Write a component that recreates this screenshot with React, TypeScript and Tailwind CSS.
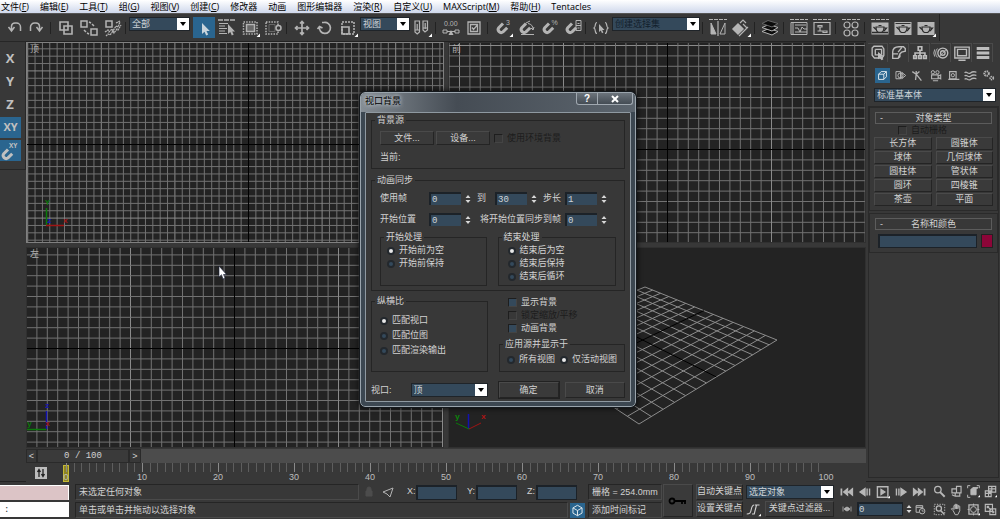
import { ReactNode, useState } from "react"
import clsx from "clsx"

const menus = [
    ["文件", "F"], ["编辑", "E"], ["工具", "T"], ["组", "G"], ["视图", "V"], ["创建", "C"],
    ["修改器", ""], ["动画", ""], ["图形编辑器", ""], ["渲染", "R"], ["自定义", "U"],
    ["MAXScript", "M"], ["帮助", "H"], ["Tentacles", ""]
]

const primitives = ["长方体", "圆锥体", "球体", "几何球体", "圆柱体", "管状体", "圆环", "四棱锥", "茶壶", "平面"]

interface IconProps {
    children: ReactNode
    size?: number
}

function Icon({ children, size = 20 }: IconProps) {
    return (
        <svg
            width={size}
            height={size}
            viewBox="0 0 20 20"
            fill="none"
            stroke="currentColor"
            strokeWidth={1.5}
            className="shrink-0"
            aria-hidden="true"
        >
            {children}
        </svg>
    )
}

const flyout = <path d="M20 15.5v3.5h-3.5z" fill="#fff" stroke="none" />
const topDash = <path d="M1 1.5h18" strokeDasharray="4 1" strokeWidth={1} />
const magnet = <path d="M10 5.500L5.800 9.700a3 3 0 0 0 4.200 4.200L14.200 9.700" strokeWidth={3} />
const pot = (
    <>
        <path d="M6 9h8c0 3-1 5-2.500 5.500h-3C7 14 6 12 6 9z" stroke="#2c2c2c" strokeWidth={1.2} />
        <path d="M6 11.500L3.500 9M14 10h2.500l-2.500 3M8.500 7.500h3" stroke="#2c2c2c" strokeWidth={1.2} />
    </>
)

const icons: Record<string, ReactNode> = {
    undo: <path d="M4.500 9l3 4 3-4M7.500 12V8a3.500 3.500 0 0 1 3.500-3h1.500a4 4 0 0 1 4 4v4" />,
    redo: <path d="M15.500 9l-3 4-3-4M12.500 12V8A3.500 3.500 0 0 0 9 5H7.500a4 4 0 0 0-4 4v4" />,
    link: <path d="M4 4h8v8H4zM8 8h8v8H8z" strokeWidth={1.6} />,
    unlink: <path d="M2 3h6v6H2zM12 11h6v6h-6zM10 4l2 1M13 6l2 2M5 12l2 2M8 15l2 1" />,
    bind: (
        <>
            <path d="M4 3h6v6H4z" />
            <path d="M3 14l3-2 1 2 3-3 1 2 3-5 2 1 2-5M4 18l2-2 2 1 3-4 1 2 3-4 1 1 3-5M14 5l4-2" strokeDasharray="2 .6" strokeWidth={1.3} />
        </>
    ),
    cursor: <path d="M8 5v11l2.500-2.300 1.700 3.800 2-1-1.700-3.500h3.300z" fill="currentColor" stroke="none" />,
    byName: (
        <>
            <path d="M1 2h17" strokeDasharray="5 1" />
            <path d="M2 5.500h9M2 8h6M2 10.500h8M2 13h6M2 15.500h8" strokeWidth={1} />
            <path d="M11 6v10l2.300-2 1.500 3.500 1.900-.9-1.500-3.200H18z" fill="currentColor" stroke="none" />
        </>
    ),
    region: (
        <>
            <path d="M3.500 4h13.500v12H3.500z" strokeDasharray="1.500 1.200" />
            <path d="M6.500 6.500h8v7h-8z" fill="#6a6a6a" />
            {flyout}
        </>
    ),
    crossing: (
        <>
            <path d="M3 4h12v12H3z" strokeDasharray="1.500 1.200" />
            <path d="M6 6.500h6v7H6z" stroke="#666" strokeWidth={1} />
            <circle cx="15.500" cy="10" r="2.500" fill="#383838" />
        </>
    ),
    move: <path d="M10 3.500v13M3.500 10h13M8 5.500l2-2 2 2M8 14.500l2 2 2-2M5.500 8l-2 2 2 2M14.500 8l2 2-2 2" strokeWidth={1.7} />,
    rotate: <path d="M9 4.500A5.500 5.500 0 1 1 4.500 9M2.500 11l2-2.500L7.500 10M9 4.500h-2" strokeWidth={1.7} />,
    scale: (
        <>
            <path d="M4 4h12v12H4z" strokeDasharray="2 1" />
            <path d="M4 9h7v7H4z" strokeWidth={1.6} />
            {flyout}
        </>
    ),
    pivot: (
        <>
            <path d="M3 3h4.500v11L5.200 16 3 14zM11 3h4.500v9L13 14l-2-2zM5.200 6v6M13.200 5v6M3 12h4M11 10h4" strokeWidth={1.2} />
            {flyout}
        </>
    ),
    spin: (
        <>
            <text x="3" y="7.500" fontSize="7" fill="currentColor" stroke="none" fontFamily="Liberation Sans">0.00</text>
            <path d="M2 12h4v3H2zM14 12h4v3h-4zM6 13.500h8" strokeWidth={1} />
            <path d="M10 12l2.500 5h-5z" fill="currentColor" stroke="none" />
        </>
    ),
    keyboard: <path d="M4 4h12v12H4zM6.500 6.500h7v7h-7zM8 9.500l1.500 2L13 7.500" strokeWidth={1.3} />,
    snap: (
        <>
            {magnet}
            <text x="13" y="7" fontSize="7" fill="currentColor" stroke="none" fontFamily="Liberation Sans">3</text>
            {flyout}
        </>
    ),
    angle: <>{magnet}<path d="M5 16.500h13M12 5.500a6 6 0 0 1 5 6M15 10l2 2 1-3M10 5l4-2" strokeWidth={1} /></>,
    percent: (
        <>
            {magnet}
            <text x="12.500" y="7" fontSize="7" fill="currentColor" stroke="none" fontFamily="Liberation Sans">%</text>
        </>
    ),
    spinner: <>{magnet}<path d="M14 2.500h5v10h-5zM14 7.500h5M15.500 5.500h2M15.500 10h2" strokeWidth={1} /></>,
    named: (
        <>
            <path d="M6 4.500c-2.500 0-1 4.500-3 5.500 2 1 .5 5.500 3 5.500M14 4.500c2.500 0 1 4.500 3 5.500-2 1-.5 5.500-3 5.500" strokeWidth={1.2} />
            <path d="M8 6v8l1.800-1.500 1.200 2.800 1.400-.7-1.200-2.600h2.300z" fill="currentColor" stroke="none" />
        </>
    ),
    mirror: (
        <>
            {topDash}
            <path d="M10 3v15" strokeWidth={1.2} />
            <path d="M3 5v11h5z" fill="currentColor" strokeWidth={1} />
            <path d="M17 5v11h-5z" strokeWidth={1} />
        </>
    ),
    align: (
        <>
            <path d="M7 6l5 5-5 5-5-5z" fill="currentColor" />
            <path d="M9 5l3-3 3 3M8 18l9-9M12 6l4 4" strokeWidth={1.2} />
            {flyout}
        </>
    ),
    layers: (
        <>
            <path d="M2 13.500l10 3.500 6-3.500-9-3z" fill="#0c0c0c" strokeWidth={1} />
            <path d="M2 9.500l10 3.500 6-3.500-9-3z" fill="#0c0c0c" strokeWidth={1} />
            <path d="M2 5.500l10 3.500 6-3.500-10-3z" fill="#0c0c0c" stroke="#666" strokeWidth={1} />
        </>
    ),
    curve: <>{topDash}<path d="M2 4.500h16v12H2zM4 5v11M6 10h3l2 4 2-5 2 2h3M6 14h12M6 7h11" strokeWidth={1} /></>,
    schematic: <>{topDash}<path d="M2 4.500h16v12H2z" strokeWidth={1.2} /><path d="M6 7.500h4v1.500H6zM11 13h4v1.500h-4zM8 9v4H5.500M8 13h3" strokeWidth={1.2} /></>,
    material: (
        <>
            {topDash}
            <g strokeWidth={1.2}>
                <circle cx="6" cy="7" r="3" /><circle cx="14" cy="7" r="3" />
                <circle cx="6" cy="15" r="3" /><circle cx="14" cy="15" r="3" />
            </g>
        </>
    ),
    renderSetup: <>{topDash}<path d="M1.500 4.500h17v12h-17z" fill="currentColor" stroke="none" /><path d="M2 14.500h16" stroke="#2c2c2c" />{pot}</>,
    frame: <><path d="M1.500 4h17v13h-17z" fill="currentColor" stroke="none" />{pot}<path d="M2.500 5.500h15" stroke="#333" strokeWidth={1} /></>,
    render: <><path d="M1.500 4h17v13h-17z" fill="currentColor" stroke="none" />{pot}{flyout}</>,
    create: <><path d="M3.500 4.500l2-2h9l2 3v7l-2 3H6l-2.500-3z" /><path d="M7 6h7v6M7 6v6h3" /><path d="M10 9v8l2-1.500 2 2.500 2-1-2-3h3z" fill="currentColor" stroke="none" /></>,
    modify: <path d="M3 16V9c0-4 3-6 7-6h5l2 2v3l-4 1-2 2v3l-2 2zM3 11h6M9 9l4-5M9 16l2-5" />,
    hierarchy: <path d="M8 3h4v4H8zM3 13h3v3H3zM8.500 13h3v3h-3zM14 13h3v3h-3zM10 7v6M4.500 13v-3h11v3" strokeWidth={1.8} />,
    motion: (
        <>
            <circle cx="12" cy="10" r="5.500" /><circle cx="12" cy="10" r="2.500" />
            <path d="M6 5a8 8 0 0 0 0 10M3 6a9 9 0 0 0 0 8M16 6l-8 8" strokeWidth={1} />
        </>
    ),
    display: <path d="M2 3.500h16v12H2zM5 6h10v7H5zM6 18h8" />,
    utilities: <path d="M3 5h14M3 10h14M3 15h14" strokeWidth={3.2} />,
    geometry: <path d="M4 8h8v8H4zM4 8l4-4h8l-4 4M16 4v8l-4 4" />,
    shapes: <><path d="M3 4h7v11H3z" /><circle cx="10" cy="10" r="4" /><path d="M12 5l6 5-6 5z" /></>,
    lights: <path d="M8 8l8 10M8 8l-1 9M2 4l6 4M8 3v5M13 4L8 8" strokeWidth={2} />,
    cameras: <><circle cx="6" cy="5" r="2.500" /><circle cx="13" cy="5" r="2.500" /><path d="M4 9h10v6H4zM14 11l4-2v6l-4-2M6 18h8" strokeWidth={1.7} /></>,
    helpers: <><path d="M4 4h10v11H4zM2 16h17" strokeWidth={1.8} /><circle cx="9" cy="9.500" r="2.500" /></>,
    warps: <path d="M1 6c3-4 5 3 9 0s5-2 9-1M1 11c3-4 5 3 9 0s5-2 9-1M1 16c3-4 5 3 9 0s5-2 9-1" strokeWidth={2} />,
    systems: <><circle cx="7" cy="7" r="3.500" strokeDasharray="2 1" strokeWidth={3} /><circle cx="15" cy="14" r="2.500" strokeDasharray="2 1" strokeWidth={2.5} /></>,
    start: <><path d="M2 5v10" strokeWidth={2.5} /><path d="M18 5l-6 5 6 5zM11 5l-6 5 6 5z" fill="currentColor" /></>,
    end: <><path d="M18 5v10" strokeWidth={2.5} /><path d="M2 5l6 5-6 5zM9 5l6 5-6 5z" fill="currentColor" /></>,
    prev: <path d="M10 5l-7 5 7 5zM13 5v10M16.500 5v10" fill="currentColor" strokeWidth={2} />,
    next: <path d="M10 5l7 5-7 5zM7 5v10M3.500 5v10" fill="currentColor" strokeWidth={2} />,
    play: <><path d="M2 2.500h15v15H2z" strokeWidth={2} /><path d="M7 6l6 4-6 4z" fill="currentColor" />{flyout}</>,
    keyMode: <path d="M2 5v10M18 5v10M9 6l-5 4 5 4zM11 6l5 4-5 4z" fill="currentColor" />,
    timeConfig: <><path d="M2 3h12v5M2 3v12h6M2 6h12" strokeWidth={1.8} /><circle cx="13" cy="13" r="5" strokeWidth={1.8} /><path d="M13 10v3h3" /></>,
    zoom: <><circle cx="7.500" cy="7" r="5" strokeWidth={2} /><path d="M11 11l7 7" strokeWidth={3} /></>,
    zoomAll: <path d="M3 6h7v6H3zM10 2h7v10h-7zM8 12v5h7v-5M3 15l4 2" strokeWidth={1.8} />,
    extents: <><path d="M6 7h8v8H6zM6 7l3-3h8l-3 3" fill="currentColor" /><path d="M1 5V1h4M15 1h4v4M1 15v4h4" />{flyout}</>,
    extentsAll: <><path d="M7 2h11v9H7zM2 9h9v9H2zM12 2v9M7 6h11M7 9v9M2 13h9" strokeWidth={1.8} />{flyout}</>,
    zoomRegion: <><path d="M2 2h16v16H2z" strokeDasharray="2 2" /><circle cx="9" cy="8.500" r="4" strokeWidth={2} /><path d="M12 12l5 5" strokeWidth={2.5} /></>,
    pan: <path d="M5 12l-3-3 2-1 2 2V4l2-1v6-7h2v7-6h2v6l1-5 2 1v7l-3 6H8z" />,
    orbit: <><path d="M3 3h14v14H3z" strokeWidth={2} /><circle cx="10" cy="10" r="4.500" /><path d="M10 1v3M10 16v3M1 10h3M16 10h3" />{flyout}</>,
    maximize: <path d="M2 2h11v11H2zM9 9h9v9H9zM5 5l6 6M5 8V5h3M15 12v3h-3" strokeWidth={1.8} />
}

const toolGroups = {
    history: ["undo", "redo"],
    linking: ["link", "unlink", "bind"],
    selection: ["byName", "region", "crossing"],
    transform: ["move", "rotate", "scale"],
    numeric: ["spin", "keyboard"],
    snaps: ["snap", "angle", "percent", "spinner"],
    mirrors: ["mirror", "align"],
    editors: ["curve", "schematic"],
    rendering: ["renderSetup", "frame", "render"]
}

function Tools({ names }: { names: string[] }) {
    return (
        <>
            {names.map((name) => (
                <button key={name} type="button" aria-label={name} className="flex w-[23px] shrink-0 items-center justify-center text-[#b4b4b4]">
                    <Icon>{icons[name]}</Icon>
                </button>
            ))}
        </>
    )
}

function Sep() {
    return <div className="mr-[3px] ml-[2px] h-3 w-px shrink-0 self-center bg-[#222]" />
}

interface DropProps {
    label: string
    options: string[]
    className?: string
    dim?: boolean
}

function Drop({ label, options, className, dim }: DropProps) {
    return (
        <div className={clsx("relative flex h-[14px] shrink-0 border border-[#1f2429] bg-[#34495b]", className)}>
            <select
                aria-label={label}
                className={clsx("w-full appearance-none bg-transparent pl-[2px] text-[9px] leading-[12px] outline-none", dim ? "text-[#12202c]" : "text-[#d0d6da]")}
            >
                {options.map((option) => <option key={option}>{option}</option>)}
            </select>
            <span className="pointer-events-none absolute inset-y-0 right-0 flex w-3 items-center justify-center bg-white">
                <svg width="6" height="4" viewBox="0 0 6 4"><path d="M0 0h6L3 4z" fill="#000" /></svg>
            </span>
        </div>
    )
}

function Spin({ label, value }: { label: string, value: string }) {
    const [current, setCurrent] = useState(value)

    return (
        <div className="flex w-[42px] items-center gap-1">
            <input
                aria-label={label}
                value={current}
                onChange={(e) => setCurrent(e.target.value)}
                className="h-[13px] w-full min-w-0 border-t-2 border-l-2 border-[#1c2228] bg-[#34495b] pl-px font-['Liberation_Mono'] text-[9px] leading-[10px] text-[#d0d6da] outline-none"
            />
            <svg width="6" height="10" viewBox="0 0 6 10" className="shrink-0"><path d="M.5 4L3 1l2.500 3zM.5 6L3 9l2.500-3z" fill="#d8d8d8" /></svg>
        </div>
    )
}

function PushButton({ children, className }: { children: ReactNode, className?: string }) {
    return (
        <button
            type="button"
            className={clsx("flex items-center justify-center border border-t-[#4a4a4a] border-r-[#242424] border-b-[#242424] border-l-[#4a4a4a] bg-[#3a3a3a] whitespace-nowrap", className)}
        >
            {children}
        </button>
    )
}

function Radio({ name, label, defaultChecked }: { name: string, label: string, defaultChecked?: boolean }) {
    return (
        <label className="flex items-center gap-1 whitespace-nowrap">
            <input
                type="radio"
                name={name}
                defaultChecked={defaultChecked}
                className="h-2 w-2 shrink-0 appearance-none rounded-full border-2 border-[#23282d] bg-[#34495b] checked:bg-[#e8e8e8]"
            />
            {label}
        </label>
    )
}

function Check({ label, disabled }: { label: string, disabled?: boolean }) {
    return (
        <label className={clsx("flex items-center gap-1 whitespace-nowrap", disabled && "text-[#1c1c1c]")}>
            <input
                type="checkbox"
                disabled={disabled}
                className={clsx("h-[9px] w-[9px] shrink-0 appearance-none border border-r-[#444] border-b-[#444] border-t-[#1e1e1e] border-l-[#1e1e1e]", disabled ? "bg-[#383838]" : "bg-[#34495b]")}
            />
            {label}
        </label>
    )
}

function Group({ title, children, className, bodyClassName }: { title: string, children: ReactNode, className?: string, bodyClassName?: string }) {
    return (
        <fieldset className={clsx("min-w-0 border border-[#252525]", className)}>
            <legend className="ml-[3px] px-[2px] leading-[10px]">{title}</legend>
            <div className={bodyClassName}>{children}</div>
        </fieldset>
    )
}

interface GridProps {
    step: number
    x: number
    y: number
}

// x and y are where the black axes cross
function OrthoGrid({ step, x, y }: GridProps) {
    const lines = Array.from({ length: 81 }, (_, i) => i - 40).filter((i) => i !== 0)

    return (
        <svg className="absolute inset-0 h-full w-full" aria-hidden="true">
            {lines.map((i) => (
                <g key={i} stroke={i % 10 === 0 ? "#8a8a8a" : "#727272"} strokeWidth={1}>
                    <line x1={x + i * step} x2={x + i * step} y1="0" y2="100%" />
                    <line y1={y + i * step} y2={y + i * step} x1="0" x2="100%" />
                </g>
            ))}
            <path d={`M${x} 0V1000M0 ${y}H2000`} stroke="#000" />
        </svg>
    )
}

const corners = [[190, 176], [328, 92], [196, 39], [63, 92]]

// maps the unit square onto the four corners of the ground plane
function project(u: number, v: number) {
    const [[x0, y0], [x1, y1], [x2, y2], [x3, y3]] = corners
    const sx = x0 - x1 + x2 - x3
    const sy = y0 - y1 + y2 - y3
    const det = (x1 - x2) * (y3 - y2) - (x3 - x2) * (y1 - y2)
    const g = (sx * (y3 - y2) - (x3 - x2) * sy) / det
    const h = ((x1 - x2) * sy - sx * (y1 - y2)) / det
    const w = g * u + h * v + 1
    return [
        ((x1 - x0 + g * x1) * u + (x3 - x0 + h * x3) * v + x0) / w,
        ((y1 - y0 + g * y1) * u + (y3 - y0 + h * y3) * v + y0) / w
    ]
}

function PerspectiveGrid() {
    const order = Array.from({ length: 15 }, (_, i) => i).filter((i) => i !== 7).concat(7)

    return (
        <svg className="absolute inset-0 h-full w-full" aria-hidden="true">
            {order.map((i) => {
                const t = i / 14
                return (
                    <path
                        key={i}
                        d={`M${project(t, 0)}L${project(t, 1)}M${project(0, t)}L${project(1, t)}`}
                        stroke={i === 7 ? "#000" : "#8c8c8c"}
                        strokeWidth={1}
                    />
                )
            })}
            <g fontSize="8" fontWeight="bold" fontFamily="Liberation Mono">
                <path d="M19.500 166V181" stroke="#1212b0" strokeWidth={1.5} />
                <path d="M20 181L7 175" stroke="#0a7a0a" />
                <path d="M20 181L32 175" stroke="#a01414" />
                <text x="6" y="171" fill="#0a8a0a">y</text>
                <text x="32" y="171" fill="#b01414">x</text>
            </g>
        </svg>
    )
}

function Viewport({ label, active, children }: { label?: string, active?: boolean, children: ReactNode }) {
    return (
        <section className={clsx("relative overflow-hidden border bg-[#232323]", active ? "border-[#808080]" : "border-[#303030]")}>
            {children}
            {label && <span className="absolute top-px left-[3px] text-[9px] leading-[11px] text-[#b0b0b0]">{label}</span>}
        </section>
    )
}

function BackgroundDialog() {
    return (
        <div
            role="dialog"
            aria-label="视口背景"
            className="absolute top-[92px] left-[360px] w-[276px] rounded-[5px] border border-[#9aa4ac] bg-[#3c4751] px-1 pb-1 shadow-[0_0_5px_2px_#0009] outline outline-[#15191d]"
        >
            <div className="-mx-1 flex h-[19px] items-start justify-between rounded-t-[4px] bg-linear-to-r from-[#858d94] via-[#454c54] via-35% to-[#5c656e] pl-1">
                <h2 className="mt-[3px] text-[9px] leading-[11px] text-black [text-shadow:0_0_4px_#c8d0d6,0_0_4px_#c8d0d6]">视口背景</h2>
                <div className="mr-[2px] flex h-[12px] rounded-b-[3px] border border-t-0 border-[#a0a8b0] bg-linear-to-b from-[#6c747c] to-[#444c54] font-['Liberation_Sans'] text-[10px] leading-[11px] font-bold text-white">
                    <button type="button" className="w-[21px] border-r border-[#a0a8b0]">?</button>
                    <button type="button" aria-label="关闭" className="flex w-[34px] items-center justify-center">
                        <svg width="8" height="8" viewBox="0 0 8 8"><path d="M1 1l6 6M7 1L1 7" stroke="#fff" strokeWidth={2} /></svg>
                    </button>
                </div>
            </div>
            <form className="flex flex-col rounded-[1px] border border-[#8f99a1] bg-[#383838] px-[5px] pt-[2px] pb-[3px] text-[9px] leading-[13px] text-[#d2d2d2]">
                <Group title="背景源" bodyClassName="px-2 pt-[6px] pb-1">
                    <div className="flex items-center gap-[2px]">
                        <PushButton className="h-[14px] w-[54px]">文件...</PushButton>
                        <PushButton className="mr-[2px] h-[14px] w-[54px]">设备...</PushButton>
                        <Check label="使用环境背景" disabled />
                    </div>
                    <div className="mt-[6px]">当前:</div>
                </Group>

                <Group title="动画同步" className="mt-[6px]" bodyClassName="px-2 pt-[7px] pb-1">
                    <div className="flex items-center">
                        <span className="w-[49px]">使用帧</span>
                        <Spin label="使用帧" value="0" />
                        <span className="w-6 pl-[6px]">到</span>
                        <Spin label="到" value="30" />
                        <span className="w-[28px] pl-[6px]">步长</span>
                        <Spin label="步长" value="1" />
                    </div>
                    <div className="mt-2 flex items-center">
                        <span className="w-[49px]">开始位置</span>
                        <Spin label="开始位置" value="0" />
                        <span className="w-[94px] pl-[9px]">将开始位置同步到帧</span>
                        <Spin label="将开始位置同步到帧" value="0" />
                    </div>
                    <div className="mt-[6px] flex gap-[11px]">
                        <Group title="开始处理" className="w-[108px]" bodyClassName="px-[6px] pt-[2px]">
                            <Radio name="start" label="开始前为空" defaultChecked />
                            <Radio name="start" label="开始前保持" />
                        </Group>
                        <Group title="结束处理" className="w-[120px]" bodyClassName="px-[9px] pt-[2px] pb-[2px]">
                            <Radio name="end" label="结束后为空" defaultChecked />
                            <Radio name="end" label="结束后保持" />
                            <Radio name="end" label="结束后循环" />
                        </Group>
                    </div>
                </Group>

                <div className="mt-[5px] flex gap-[11px]">
                    <Group title="纵横比" className="w-[117px]" bodyClassName="flex flex-col gap-[2px] px-2 pt-2">
                        <Radio name="aspect" label="匹配视口" defaultChecked />
                        <Radio name="aspect" label="匹配位图" />
                        <Radio name="aspect" label="匹配渲染输出" />
                    </Group>
                    <div className="flex-1">
                        <div className="pl-[9px]">
                            <Check label="显示背景" />
                            <Check label="锁定缩放/平移" disabled />
                            <Check label="动画背景" />
                        </div>
                        <Group title="应用源并显示于" className="mt-1" bodyClassName="flex gap-[5px] px-[7px] pt-1 pb-[5px]">
                            <Radio name="apply" label="所有视图" />
                            <Radio name="apply" label="仅活动视图" defaultChecked />
                        </Group>
                    </div>
                </div>

                <div className="mt-[10px] flex items-center">
                    <span className="w-[40px]">视口:</span>
                    <Drop label="视口" options={["顶", "前", "左"]} className="w-[77px]" />
                    <PushButton className="ml-[11px] h-[16px] w-[61px] outline outline-[#222]">确定</PushButton>
                    <PushButton className="ml-[6px] h-[16px] w-[61px]">取消</PushButton>
                </div>
            </form>
        </div>
    )
}

function Rollout({ title, children }: { title: string, children: ReactNode }) {
    return (
        <section className="border border-[#2a2a2a] px-1 pb-1">
            <h3 className="relative mx-px mt-1 border border-[#5c5c5c] text-center leading-[10px]">
                <span className="absolute left-1">-</span>
                {title}
            </h3>
            {children}
        </section>
    )
}

function CommandPanel() {
    return (
        <aside className="flex w-[134px] shrink-0 flex-col border-b border-[#222] pb-[3px] pl-[2px] text-[9px] text-[#d2d2d2]">
            <div className="mt-[2px] flex gap-px">
                {["create", "modify", "hierarchy", "motion", "display", "utilities"].map((name) => (
                    <button key={name} type="button" aria-label={name} className="flex h-[19px] w-5 items-center justify-center border-t border-r border-[#4a4a4a] text-[#bdbdbd]">
                        <Icon size={18}>{icons[name]}</Icon>
                    </button>
                ))}
            </div>
            <div className="mt-[6px] mr-1 ml-[7px] flex justify-between">
                {["geometry", "shapes", "lights", "cameras", "helpers", "warps", "systems"].map((name, i) => (
                    <button key={name} type="button" aria-label={name} className={clsx("flex h-[15px] w-[15px] items-center justify-center", i === 0 ? "bg-[#2a658f] text-[#dfe8ee]" : "text-[#b4b4b4]")}>
                        <Icon size={13}>{icons[name]}</Icon>
                    </button>
                ))}
            </div>
            <Drop label="类别" options={["标准基本体", "扩展基本体"]} className="mt-[5px] mr-1 ml-[6px]" />
            <div className="mt-1 mr-px flex flex-1 flex-col gap-[2px] border border-[#2a2a2a]">
                <Rollout title="对象类型">
                    <div className="pl-6 leading-[13px]">
                        <Check label="自动栅格" disabled />
                    </div>
                    <div className="grid grid-cols-2 gap-x-1 gap-y-px">
                        {primitives.map((name) => <PushButton key={name} className="h-[13px] leading-[11px]">{name}</PushButton>)}
                    </div>
                </Rollout>
                <Rollout title="名称和颜色">
                    <div className="mt-1 flex h-[14px] gap-1 pl-1">
                        <input aria-label="名称" className="w-full min-w-0 border-2 border-r border-b border-[#1c2228] bg-[#34495b] outline-none" />
                        <button type="button" aria-label="颜色" className="w-3 shrink-0 border border-[#222] bg-[#8c0538]" />
                    </div>
                </Rollout>
            </div>
        </aside>
    )
}

function TimeSlider() {
    return (
        <div className="flex h-[14px] bg-[#4c4c4c] text-[9px]">
            <button type="button" className="w-[11px] border border-[#2a2a2a] bg-[#383838] leading-[10px]">&lt;</button>
            <div className="w-[92px] border border-[#2a2a2a] bg-[#3a3a3a] text-center font-['Liberation_Mono'] text-[9px] leading-[12px]">0 / 100</div>
            <button type="button" className="w-[12px] border border-[#2a2a2a] bg-[#383838] leading-[10px]">&gt;</button>
        </div>
    )
}

function TrackBar() {
    return (
        <div className="relative h-[19px] pr-[2px] pl-[2px]">
            <div className="absolute top-[2px] left-[37px] h-[17px] w-[6px] border border-[#c5b934] bg-[#8d8424]" />
            <div className="relative mx-[38px] grid grid-cols-[repeat(100,minmax(0,1fr))]">
                {Array.from({ length: 100 }, (_, i) => (
                    <span key={i} className={clsx("h-[9px] border-l", i % 10 === 0 ? "border-[#8a8a8a]" : "border-[#5e5e5e]")} />
                ))}
            </div>
            <div className="relative grid grid-cols-11 text-center text-[9px] leading-[10px] text-[#bdbdbd]">
                {Array.from({ length: 11 }, (_, i) => <span key={i}>{i * 10}</span>)}
            </div>
            <button type="button" aria-label="曲线" className="absolute top-1 left-[9px] h-3 w-3 bg-[#bdbdbd]">
                <svg width="12" height="12" viewBox="0 0 12 12"><path d="M4 10V3M2.500 5L4 2.500 5.500 5M8 2v7M6.500 7L8 9.500 9.500 7" stroke="#222" strokeWidth={1.3} fill="none" /></svg>
            </button>
        </div>
    )
}

function StatusBox({ children, className }: { children: ReactNode, className?: string }) {
    return <div className={clsx("h-[16px] overflow-hidden border border-t-[#252525] border-r-[#4a4a4a] border-b-[#4a4a4a] border-l-[#252525] px-[3px] leading-[14px] whitespace-nowrap", className)}>{children}</div>
}

function StatusBar() {
    const [frame, setFrame] = useState("0")

    return (
        <footer className="flex h-[37px] shrink-0 text-[9px] text-[#d2d2d2]">
            <div className="mr-[6px] flex w-[69px] shrink-0 flex-col gap-[2px] pt-[3px]">
                <div className="h-[15px] border-t border-r border-white bg-[#dcc4c6]" />
                <input aria-label="脚本侦听器" defaultValue=":" className="h-[15px] w-full bg-white pl-1 font-['Liberation_Mono'] text-[9px] text-[#333] outline-none" />
            </div>
            <div className="flex min-w-0 flex-1 flex-col gap-[2px] pt-[2px]">
                <div className="flex items-center">
                    <StatusBox className="min-w-0 flex-1">未选定任何对象</StatusBox>
                    <svg width="20" height="14" viewBox="0 0 20 14" className="shrink-0"><path d="M7 6h6v5H7zM8 6V4a2 2 0 0 1 4 0v2" fill="#4c4c4c" stroke="#4c4c4c" /></svg>
                    <svg width="18" height="14" viewBox="0 0 18 14" className="shrink-0"><path d="M4 7l10-4-3 9-3-3z" fill="none" stroke="#b4b4b4" /></svg>
                    {["X", "Y", "Z"].map((axis) => (
                        <label key={axis} className="flex items-center pl-[10px]">
                            <span className="w-[9px]">{axis}:</span>
                            <input className="h-[15px] w-[41px] border-2 border-r border-b border-[#1c2228] bg-[#34495b] outline-none" />
                        </label>
                    ))}
                    <StatusBox className="ml-[11px] w-[74px]">栅格 = 254.0mm</StatusBox>
                </div>
                <div className="flex items-center">
                    <StatusBox className="min-w-0 flex-1">单击或单击并拖动以选择对象</StatusBox>
                    <button type="button" aria-label="时间标记" className="ml-[2px] flex h-[15px] w-[15px] items-center justify-center bg-[#2a658f] text-[#dfe8ee]">
                        <Icon size={13}><path d="M10 2l7 4v8l-7 4-7-4V6zM3 6l7 4 7-4M10 10v8" /></Icon>
                    </button>
                    <StatusBox className="ml-[3px] w-[74px]">添加时间标记</StatusBox>
                </div>
            </div>
            <div className="ml-px flex shrink-0 gap-[3px] pt-[2px]">
                <PushButton className="h-[33px] w-[30px]">
                    <svg width="20" height="10" viewBox="0 0 20 10" fill="none" stroke="#000" strokeWidth={1.8}><circle cx="4" cy="5" r="2.500" /><path d="M7 5h11M14 5v3M17 5v3" /></svg>
                </PushButton>
                <div className="flex flex-col gap-px">
                    <PushButton className="h-[16px] w-[47px]">自动关键点</PushButton>
                    <PushButton className="h-[16px] w-[47px]">设置关键点</PushButton>
                </div>
                <div className="flex w-[88px] flex-col gap-[2px] pt-px">
                    <Drop label="关键点集" options={["选定对象"]} />
                    <div className="flex items-center gap-1">
                        <Icon size={15}><path d="M1 16c4 0 5-1 6-6s2-6 4-6M14 4l-3 12h-3M12 4h6" />{flyout}</Icon>
                        <PushButton className="h-[16px] flex-1">关键点过滤器...</PushButton>
                    </div>
                </div>
            </div>
            <div className="ml-[6px] flex w-[91px] shrink-0 flex-col gap-[3px] pt-[3px] text-[#b8b8b8]">
                <div className="flex items-center justify-between pr-[5px]">
                    {["start", "prev", "play", "next", "end"].map((name) => (
                        <button key={name} type="button" aria-label={name}><Icon size={14}>{icons[name]}</Icon></button>
                    ))}
                </div>
                <div className="flex items-center gap-[3px]">
                    <button type="button" aria-label="keyMode" className="mx-[2px]"><Icon size={10}>{icons.keyMode}</Icon></button>
                    <input
                        aria-label="当前帧"
                        value={frame}
                        onChange={(e) => setFrame(e.target.value)}
                        className="h-[14px] w-[46px] border-2 border-r border-b border-[#1c2228] bg-[#34495b] font-['Liberation_Mono'] text-[9px] text-[#d0d6da] outline-none"
                    />
                    <svg width="6" height="10" viewBox="0 0 6 10"><path d="M.5 4L3 1l2.500 3zM.5 6L3 9l2.500-3z" fill="#d8d8d8" /></svg>
                    <button type="button" aria-label="timeConfig"><Icon size={11}>{icons.timeConfig}</Icon></button>
                </div>
            </div>
            <div className="mr-px grid w-[68px] shrink-0 grid-cols-4 place-items-center text-[#b8b8b8]">
                {["zoom", "zoomAll", "extents", "extentsAll", "zoomRegion", "pan", "orbit", "maximize"].map((name) => (
                    <button key={name} type="button" aria-label={name}><Icon size={13}>{icons[name]}</Icon></button>
                ))}
            </div>
        </footer>
    )
}

export default function App() {
    return (
        <div className="relative flex min-h-screen flex-col overflow-hidden bg-[#383838] font-['Liberation_Sans','Noto_Sans_CJK_SC',sans-serif] text-[#d2d2d2]">
            <nav className="flex h-[13px] shrink-0 gap-[11px] bg-linear-to-b from-white to-[#cfd8ec] pl-px font-['Open_Sans','Noto_Sans_CJK_SC',sans-serif] text-[9px] leading-[12px] text-black">
                {menus.map(([title, key]) => (
                    <button key={title} type="button" className="whitespace-nowrap">
                        {title}{key && <>(<u>{key}</u>)</>}
                    </button>
                ))}
            </nav>

            <div className="flex h-[28px] shrink-0 overflow-hidden border-t border-[#555] pl-[2px] text-[9px]">
                <Tools names={toolGroups.history} />
                <Sep />
                <Tools names={toolGroups.linking} />
                <Sep />
                <Drop label="选择过滤器" options={["全部", "几何体"]} className="mt-[3px] w-[61px]" />
                <button type="button" aria-label="select" className="mt-[3px] ml-[3px] flex h-[21px] w-[22px] shrink-0 items-center justify-center bg-[#2a658f] text-[#c8d4dc]">
                    <Icon>{icons.cursor}</Icon>
                </button>
                <Tools names={toolGroups.selection} />
                <Sep />
                <Tools names={toolGroups.transform} />
                <Drop label="参考坐标系" options={["视图", "屏幕"]} className="mt-[3px] ml-px w-[50px]" />
                <Tools names={["pivot"]} />
                <Sep />
                <Tools names={toolGroups.numeric} />
                <Sep />
                <Tools names={toolGroups.snaps} />
                <Sep />
                <Tools names={["named"]} />
                <Drop label="命名选择集" options={["创建选择集"]} dim className="mt-[3px] w-[88px]" />
                <Sep />
                <Tools names={toolGroups.mirrors} />
                <Sep />
                <Tools names={["layers"]} />
                <Sep />
                <Tools names={toolGroups.editors} />
                <Sep />
                <Tools names={["material"]} />
                <Sep />
                <Tools names={toolGroups.rendering} />
                <div className="w-[3px] border-r border-[#222]" />
            </div>

            <div className="flex flex-1">
                <div className="flex min-w-0 flex-1">
                    <div className="w-[26px] shrink-0 border-b border-[#222]">
                        <div className="flex flex-col items-start gap-px border-t border-r border-b border-[#262626] pt-[6px] pb-2 text-[13px] font-bold text-[#c0c0c0]">
                            {["X", "Y", "Z"].map((axis) => (
                                <button key={axis} type="button" className="h-[22px] w-5 font-['Open_Sans']">{axis}</button>
                            ))}
                            <button type="button" className="h-[21px] w-[21px] bg-[#2a658f] font-['Open_Sans'] text-[11px]">XY</button>
                            <button type="button" aria-label="XY snap" className="mt-px h-[21px] w-[21px] bg-[#2a658f]">
                                <Icon>
                                    <g transform="translate(-2 3)">{magnet}</g>
                                    <text x="9" y="7" fontSize="6.5" fill="currentColor" stroke="none" fontFamily="Open Sans">XY</text>
                                </Icon>
                            </button>
                        </div>
                    </div>
                    <div className="flex min-w-0 flex-1 flex-col">
                        <div className="grid flex-1 grid-cols-2 grid-rows-2 gap-1 border-t border-[#222] pb-px">
                            <Viewport label="顶" active>
                                <OrthoGrid step={7.36} x={221.5} y={101.5} />
                                <svg className="absolute bottom-3 left-4" width="30" height="40" viewBox="0 0 30 40" fontSize="8" fontWeight="bold" fontFamily="Liberation Mono">
                                    <path d="M3.500 18V35" stroke="#0a7a0a" strokeWidth={1.5} />
                                    <path d="M3 35.500H21" stroke="#a01414" strokeWidth={1.5} />
                                    <text x="2" y="15" fill="#0a7a0a">Y</text>
                                    <text x="20" y="33" fill="#a01414">x</text>
                                    <text x="4" y="33" fill="#1212b0">z</text>
                                </svg>
                            </Viewport>
                            <Viewport label="前">
                                <OrthoGrid step={10.4} x={218.5} y={106.5} />
                            </Viewport>
                            <Viewport label="左">
                                <OrthoGrid step={10.4} x={207.5} y={100.5} />
                                <svg className="absolute bottom-3 left-0" width="30" height="40" viewBox="0 0 30 40" fontSize="8" fontWeight="bold" fontFamily="Liberation Mono">
                                    <path d="M19.500 16V34" stroke="#1212b0" strokeWidth={1.5} />
                                    <path d="M0 34.500H19" stroke="#0a7a0a" strokeWidth={1.5} />
                                    <text x="0" y="31" fill="#0a7a0a">y</text>
                                    <text x="18" y="31" fill="#a01414">x</text>
                                    <text x="18" y="13" fill="#1212b0">z</text>
                                </svg>
                            </Viewport>
                            <Viewport>
                                <PerspectiveGrid />
                            </Viewport>
                        </div>
                        <TimeSlider />
                        <TrackBar />
                    </div>
                </div>
                <CommandPanel />
            </div>
            <StatusBar />

            <BackgroundDialog />
            <svg className="absolute top-[265px] left-[218px]" width="9" height="15" viewBox="0 0 9 15">
                <path d="M1 1v11l2.500-2.300L5 14l2-1-1.500-3.500H8.500z" fill="#fff" stroke="#101830" strokeWidth={0.6} />
            </svg>
        </div>
    )
}
